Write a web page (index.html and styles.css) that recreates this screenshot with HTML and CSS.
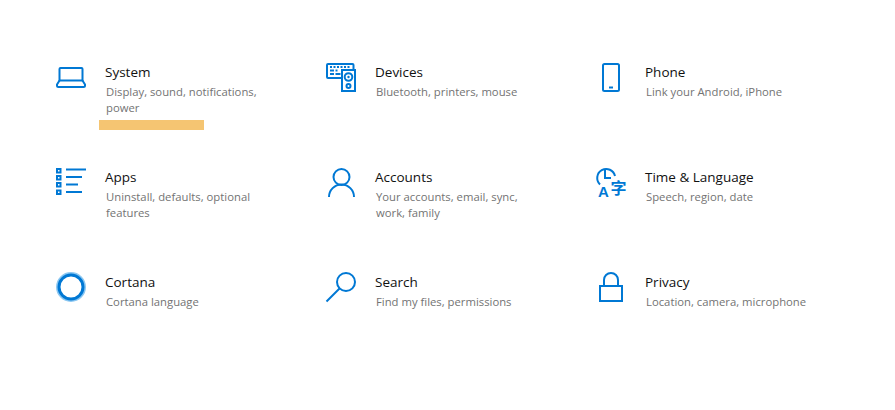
FILE: index.html
```html
<!DOCTYPE html>
<html lang="en">
<head>
<meta charset="utf-8">
<title>Settings</title>
<link rel="stylesheet" href="styles.css">
</head>
<body>
<main class="grid">
  <a class="item">
    <svg class="icon" viewBox="0 0 34 34"><path class="s" d="M5.500 8h21a1 1 0 0 1 1 1v11.500h-23V9a1 1 0 0 1 1-1z"/><path class="s" d="M4.500 20.500L2 24.500v1a1.500 1.500 0 0 0 1.500 1.500h25a1.500 1.500 0 0 0 1.500-1.500v-1l-2.500-4"/></svg>
    <div class="text"><h2>System</h2><p>Display, sound, notifications, power</p></div>
    <span class="highlight"></span>
  </a>
  <a class="item">
    <svg class="icon" viewBox="0 0 34 34"><path class="s" d="M21 18H3a1 1 0 0 1-1-1V5a1 1 0 0 1 1-1h24.500a1 1 0 0 1 1 1v4"/><path class="d" d="M5 7h2M8.500 7h2M12 7h2M15.500 7h2M19 7h2M22.500 7h2M5 10.500h4M10.500 10.500h2M5 14h4M10.500 14h5"/><rect class="s t" x="17" y="10" width="13" height="21"/><circle class="s" cx="23.500" cy="17" r="3.800"/><circle class="f" cx="23.500" cy="17" r="1.200"/><circle class="s" cx="23.500" cy="26" r="2"/></svg>
    <div class="text"><h2>Devices</h2><p>Bluetooth, printers, mouse</p></div>
  </a>
  <a class="item">
    <svg class="icon" viewBox="0 0 34 34"><rect class="s" x="8" y="4" width="16" height="27" rx="1.500"/><path class="s" d="M14 27.500h4"/></svg>
    <div class="text"><h2>Phone</h2><p>Link your Android, iPhone</p></div>
  </a>
  <a class="item">
    <svg class="icon" viewBox="0 0 34 34"><path class="d" d="M11 4.500h20M11 12h16M11 19.500h12M11 27h16"/><path class="f" d="M1 3h5.500v5.500H1zM1 10h5.500v5.500H1zM1 17h5.500v5.500H1zM1 24.500h5.500V30H1z"/><path class="w" d="M3 5h1.500v1.500H3zM3 12h1.500v1.500H3zM3 19h1.500v1.500H3zM3 26.500h1.500V28H3z"/></svg>
    <div class="text"><h2>Apps</h2><p>Uninstall, defaults, optional features</p></div>
  </a>
  <a class="item">
    <svg class="icon" viewBox="0 0 34 34"><circle class="s" cx="16.500" cy="12" r="8"/><path class="s" d="M4 32a12.500 12.500 0 0 1 25 0"/></svg>
    <div class="text"><h2>Accounts</h2><p>Your accounts, email, sync, work, family</p></div>
  </a>
  <a class="item">
    <svg class="icon" viewBox="0 0 34 34"><path class="s" d="M5 19.500A9 9 0 1 1 20 11"/><path class="s" d="M10 5v8h6"/><text class="gA" x="3" y="32">A</text><text class="gZ" x="15.500" y="29">字</text></svg>
    <div class="text"><h2>Time &amp; Language</h2><p>Speech, region, date</p></div>
  </a>
  <a class="item">
    <svg class="icon" viewBox="0 0 34 34"><circle class="halo" cx="16" cy="17" r="14"/><circle class="ring" cx="16" cy="17" r="12"/></svg>
    <div class="text"><h2>Cortana</h2><p>Cortana language</p></div>
  </a>
  <a class="item">
    <svg class="icon" viewBox="0 0 34 34"><circle class="s" cx="21" cy="12" r="9"/><path class="s" d="M14.500 18.500L1.500 31.500"/></svg>
    <div class="text"><h2>Search</h2><p>Find my files, permissions</p></div>
  </a>
  <a class="item">
    <svg class="icon" viewBox="0 0 34 34"><rect class="s" x="5" y="16" width="22" height="15"/><path class="s" d="M9 16V10a7 7 0 0 1 14 0v6"/></svg>
    <div class="text"><h2>Privacy</h2><p>Location, camera, microphone</p></div>
  </a>
</main>
</body>
</html>
```
FILE: styles.css
```css
html, body {
  margin: 0;
  padding: 0;
  background: #fff;
}
body {
  width: 895px;
  height: 410px;
  overflow: hidden;
  font-family: "Open Sans", "Noto Sans", "Liberation Sans", sans-serif;
}
.grid {
  display: grid;
  grid-template-columns: repeat(3, 270px);
  grid-auto-rows: 105px;
  padding: 60px 0 0 55px;
}
.item {
  position: relative;
  display: flex;
  gap: 16px;
}
.icon {
  flex: none;
  width: 34px;
  height: 34px;
}
.text {
  width: 166px;
}
h2 {
  margin: 0;
  font-size: 13.500px;
  font-weight: 400;
  line-height: 24px;
  color: #111;
}
p {
  margin: 0;
  padding-left: 1px;
  font-size: 11.300px;
  line-height: 16px;
  color: #737373;
}
.highlight {
  position: absolute;
  left: 44px;
  top: 60px;
  width: 105px;
  height: 10px;
  background: #f5c572;
}
.s { fill: none; stroke: #0078d4; stroke-width: 2; }
.t { fill: #fff; }
.d { fill: none; stroke: #0078d4; stroke-width: 2; }
.f { fill: #0078d4; }
.w { fill: #fff; }
.halo { fill: none; stroke: #8cc8f2; stroke-width: 2; }
.ring { fill: none; stroke: #0078d4; stroke-width: 3; }
.gA { fill: #0078d4; font: 700 15px "Liberation Sans", sans-serif; }
.gZ { fill: #0078d4; font: 700 16px "Noto Sans CJK SC", sans-serif; }
```
